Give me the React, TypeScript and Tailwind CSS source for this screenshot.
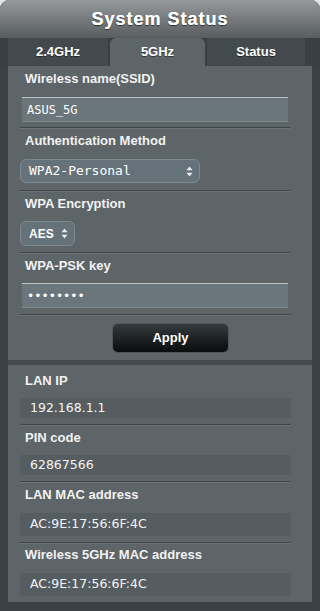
import React from 'react';

const labelCls = "block h-[14px] leading-[14px] pl-[17px] text-[13px] font-bold text-[#f2f2f2] font-['Liberation_Sans',Arial,sans-serif]";

const Separator: React.FC<{ className?: string }> = ({ className = '' }) => (
  <div className={`ml-[12px] w-[270px] h-[2px] border-t border-[#3f4649] border-b border-b-[#6d7477] ${className}`} />
);

const Arrows: React.FC = () => (
  <svg width="7" height="11" viewBox="0 0 7 11" className="shrink-0">
    <path d="M3.5 0.5 L6.5 4.2 L0.5 4.2 Z" fill="#e8ecee" />
    <path d="M3.5 10.5 L6.5 6.8 L0.5 6.8 Z" fill="#e8ecee" />
  </svg>
);

const ValueBox: React.FC<{ value: string; className?: string }> = ({ value, className = '' }) => (
  <div
    className={`ml-[12px] w-[271px] bg-[#565d60] flex items-center pl-[10px] text-[12.5px] text-[#f4f4f4] font-['DejaVu_Sans',sans-serif] ${className}`}
  >
    {value}
  </div>
);

export default function App() {
  return (
    <div className="w-[320px] h-[611px] bg-[#e6e6e6]">
      <div className="h-full rounded-t-[9px] bg-[#3b4245] flex flex-col overflow-hidden">
        {/* Header */}
        <div className="h-[38px] shrink-0 bg-gradient-to-b from-[#979a9c] via-[#777b7e] to-[#585d60] flex items-center justify-center">
          <span className="text-[18px] font-bold tracking-[1px] text-white font-['Liberation_Sans',Arial,sans-serif] [text-shadow:0_0_0.6px_#fff,0_1px_1px_rgba(0,0,0,0.6)]">
            System Status
          </span>
        </div>

        {/* Tabs */}
        <div className="h-[28px] shrink-0 flex pl-[8px] gap-[2px] bg-[#394044] text-[13px] font-bold text-white font-['Liberation_Sans',Arial,sans-serif]">
          <div className="w-[100px] flex items-center justify-center bg-[#424a4e] [text-shadow:0_1px_1px_rgba(0,0,0,0.5)]">2.4GHz</div>
          <div className="w-[95px] flex items-center justify-center bg-[#5e6568] rounded-t-[6px] [text-shadow:0_1px_1px_rgba(0,0,0,0.5)]">5GHz</div>
          <div className="w-[98px] flex items-center justify-center bg-[#424a4e] [text-shadow:0_1px_1px_rgba(0,0,0,0.5)]">Status</div>
        </div>

        {/* Wireless settings panel */}
        <div className="mx-[8px] h-[294px] shrink-0 bg-[#5e6568] pt-[6px]">
          <span className={labelCls}>Wireless name(SSID)</span>
          <div className="mt-[11px] ml-[14px] w-[266px] h-[25px] bg-[#6a767b] border-t border-[#b9c1c4] border-b border-b-[#7f898e] flex items-center pl-[5px] text-[12px] text-white font-['DejaVu_Sans_Mono',monospace]">
            ASUS_5G
          </div>
          <Separator className="mt-[5px]" />

          <span className={`${labelCls} mt-[5px]`}>Authentication Method</span>
          <div className="mt-[11px] ml-[12px] w-[180px] h-[24px] rounded-[6px] bg-[#66727a] border border-[#7e898e] flex items-center justify-between pl-[8px] pr-[6px] text-[13px] text-white font-['DejaVu_Sans_Mono',monospace]">
            <span>WPA2-Personal</span>
            <Arrows />
          </div>
          <Separator className="mt-[7px]" />

          <span className={`${labelCls} mt-[5px]`}>WPA Encryption</span>
          <div className="mt-[10px] ml-[12px] w-[55px] h-[25px] rounded-[6px] bg-[#66727a] border border-[#7e898e] flex items-center justify-between pl-[8px] pr-[6px] text-[12px] font-bold text-white font-['Liberation_Sans',Arial,sans-serif]">
            <span>AES</span>
            <Arrows />
          </div>
          <Separator className="mt-[6px]" />

          <span className={`${labelCls} mt-[5px]`}>WPA-PSK key</span>
          <div className="mt-[10px] ml-[14px] w-[266px] h-[25px] bg-[#6a767b] border-t border-[#b9c1c4] border-b border-b-[#7f898e] flex items-center pl-[5px] text-[12px] text-white font-['DejaVu_Sans_Mono',monospace]">
            ••••••••
          </div>
          <Separator className="mt-[6px]" />

          <div className="mt-[7px] flex">
            <button className="ml-[104px] w-[117px] h-[30px] rounded-[6px] bg-gradient-to-b from-[#353b3e] to-[#0b0d0e] border border-[#50575a] text-[13px] font-bold text-white font-['Liberation_Sans',Arial,sans-serif]">
              Apply
            </button>
          </div>
        </div>

        <div className="h-[5px] shrink-0 mx-[8px] bg-[#434b4e]" />

        {/* Status panel */}
        <div className="mx-[8px] h-[237px] shrink-0 bg-[#5e6568] pt-[9px]">
          <span className={labelCls}>LAN IP</span>
          <ValueBox value="192.168.1.1" className="mt-[10px] h-[20px]" />
          <Separator className="mt-[6px]" />

          <span className={`${labelCls} mt-[5px]`}>PIN code</span>
          <ValueBox value="62867566" className="mt-[10px] h-[20px]" />
          <Separator className="mt-[6px]" />

          <span className={`${labelCls} mt-[5px]`}>LAN MAC address</span>
          <ValueBox value="AC:9E:17:56:6F:4C" className="mt-[11px] h-[23px]" />
          <Separator className="mt-[6px]" />

          <span className={`${labelCls} mt-[4px]`}>Wireless 5GHz MAC address</span>
          <ValueBox value="AC:9E:17:56:6F:4C" className="mt-[11px] h-[23px]" />
        </div>
      </div>
    </div>
  );
}
